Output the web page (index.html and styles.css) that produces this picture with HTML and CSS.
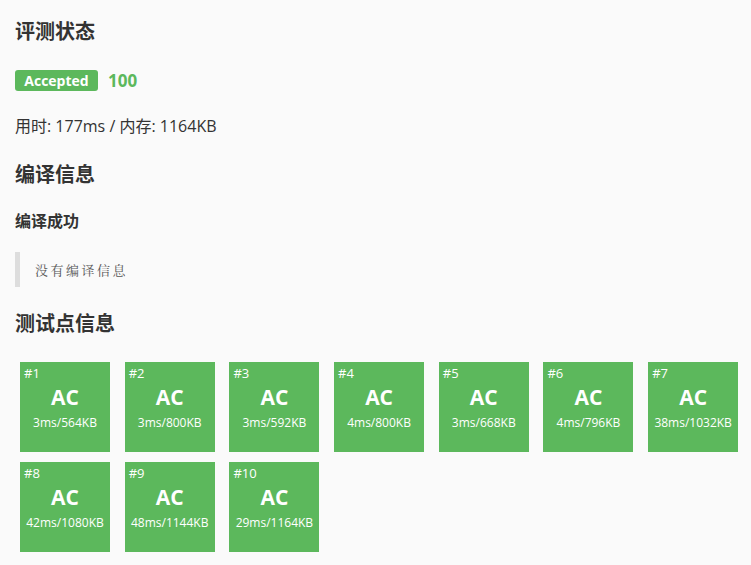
FILE: index.html
```html
<!DOCTYPE html>
<html lang="zh-CN">
<head>
    <meta charset="UTF-8">
    <title>评测详情</title>
    <link rel="stylesheet" href="styles.css">
</head>
<body>
    <div id="container">
        <h2 class="title">评测状态</h2>
        <div class="status">
            <span class="badge">Accepted</span>
            <span class="score">100</span>
        </div>
        <p class="usage">用时: 177ms / 内存: 1164KB</p>

        <h2 class="title">编译信息</h2>
        <h4 class="subtitle">编译成功</h4>
        <blockquote class="compile-msg">没有编译信息</blockquote>

        <h2 class="title">测试点信息</h2>
        <div id="cases"></div>
    </div>

    <script>
        var cases = [
            "3ms/564KB", "3ms/800KB", "3ms/592KB", "4ms/800KB", "3ms/668KB",
            "4ms/796KB", "38ms/1032KB", "42ms/1080KB", "48ms/1144KB", "29ms/1164KB"
        ];

        var box = document.getElementById('cases');
        for (var i = 0; i < cases.length; i++) {
            var item = document.createElement('div');
            item.className = 'case';
            item.innerHTML = '<span class="case-id">#' + (i + 1) + '</span>' +
                '<span class="case-result">AC</span>' +
                '<span class="case-info">' + cases[i] + '</span>';
            box.appendChild(item);
        }
    </script>
</body>
</html>
```

FILE: styles.css
```css
body {
    font-family: "Open Sans", "Noto Sans CJK SC", sans-serif;
    margin: 0;
    padding: 0;
    background: #fafafa;
    color: #333;
}

#container {
    padding: 16px 5px 0 15px;
}

.title {
    font-size: 20px;
    font-weight: bold;
    line-height: 30px;
    margin: 0;
    font-family: "Noto Sans CJK SC", sans-serif;
}

.status {
    display: flex;
    align-items: center;
    margin-top: 24px;
    height: 21px;
}

.badge {
    background-color: #5cb85c;
    color: #fff;
    font-weight: bold;
    font-size: 14px;
    line-height: 21px;
    width: 83px;
    text-align: center;
    border-radius: 3px;
}

.score {
    color: #5cb85c;
    font-weight: bold;
    font-size: 17px;
    margin-left: 10px;
}

.usage {
    font-size: 16px;
    line-height: 22px;
    margin: 24px 0 0 0;
}

.usage + .title {
    margin-top: 22px;
}

.subtitle {
    font-size: 16px;
    font-weight: bold;
    line-height: 24px;
    margin: 19px 0 0 0;
    font-family: "Noto Sans CJK SC", sans-serif;
}

.compile-msg {
    margin: 20px 0 0 0;
    border-left: 5px solid #ddd;
    height: 35px;
    line-height: 35px;
    padding-left: 15px;
    font-size: 13px;
    letter-spacing: 2.5px;
    color: #555;
    font-family: "Noto Serif CJK SC", "Noto Sans CJK SC", serif;
}

.compile-msg + .title {
    margin-top: 21px;
}

#cases {
    display: flex;
    flex-wrap: wrap;
    column-gap: 14.7px;
    row-gap: 10px;
    margin-top: 24px;
    padding-left: 5px;
}

.case {
    position: relative;
    width: 90px;
    height: 90px;
    background-color: #5cb85c;
    color: #fff;
    display: flex;
    flex-direction: column;
    align-items: center;
}

.case-id {
    position: absolute;
    left: 4px;
    top: 2px;
    font-size: 13px;
}

.case-result {
    margin-top: 21px;
    font-size: 21px;
    font-weight: bold;
    line-height: 28px;
}

.case-info {
    font-size: 12px;
    line-height: 18px;
    margin-top: 3px;
}
```
